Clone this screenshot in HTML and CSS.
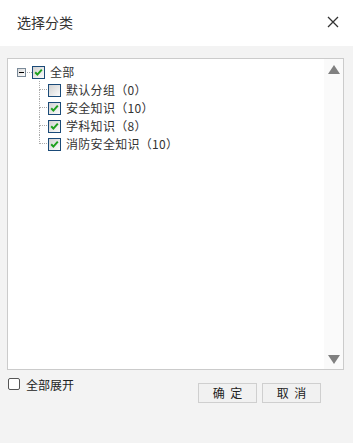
FILE: index.html
```html
<!DOCTYPE html>
<html lang="zh">
<head>
<meta charset="utf-8">
<title>选择分类</title>
<link rel="stylesheet" href="styles.css">
</head>
<body>
<div class="dialog">
  <div class="header">
    <span class="title">选择分类</span>
    <svg class="close" width="12" height="12" viewBox="0 0 12 12"><path d="M1 1L11 11M11 1L1 11" stroke="#333" stroke-width="1.3" fill="none"/></svg>
  </div>
  <div class="body">
    <div class="panel">
      <div class="tree">
        <div class="row parent">
          <svg class="switch" width="9" height="9" viewBox="0 0 9 9"><defs><linearGradient id="sg" x1="0" y1="0" x2="1" y2="1"><stop offset="0" stop-color="#d8d8d8"/><stop offset="1" stop-color="#fff"/></linearGradient></defs><rect x="0.5" y="0.5" width="8" height="8" fill="url(#sg)" stroke="#7a8a99"/><path d="M2 4.5H7" stroke="#000" stroke-width="1"/></svg>
          <span class="hline"></span>
          <svg class="cb" width="13" height="13" viewBox="0 0 13 13"><defs><linearGradient id="cg" x1="0" y1="0" x2="1" y2="1"><stop offset="0" stop-color="#d0d0d0"/><stop offset="1" stop-color="#fdfdfd"/></linearGradient></defs><rect x="0.5" y="0.5" width="12" height="12" fill="url(#cg)" stroke="#1a4a78"/><path d="M3.2 6.2L5.4 8.6L9.8 3.6" stroke="#1ea01e" stroke-width="2" fill="none"/></svg>
          <span class="label">全部</span>
        </div>
        <div class="children">
          <div class="row child">
            <span class="conn"><span class="top"></span><span class="bot"></span></span>
            <svg class="cb" width="13" height="13" viewBox="0 0 13 13"><rect x="0.5" y="0.5" width="12" height="12" fill="url(#cg)" stroke="#1a4a78"/></svg>
            <span class="label">默认分组（0）</span>
          </div>
          <div class="row child">
            <span class="conn"><span class="top"></span><span class="bot"></span></span>
            <svg class="cb" width="13" height="13" viewBox="0 0 13 13"><rect x="0.5" y="0.5" width="12" height="12" fill="url(#cg)" stroke="#1a4a78"/><path d="M3.2 6.2L5.4 8.6L9.8 3.6" stroke="#1ea01e" stroke-width="2" fill="none"/></svg>
            <span class="label">安全知识（10）</span>
          </div>
          <div class="row child">
            <span class="conn"><span class="top"></span><span class="bot"></span></span>
            <svg class="cb" width="13" height="13" viewBox="0 0 13 13"><rect x="0.5" y="0.5" width="12" height="12" fill="url(#cg)" stroke="#1a4a78"/><path d="M3.2 6.2L5.4 8.6L9.8 3.6" stroke="#1ea01e" stroke-width="2" fill="none"/></svg>
            <span class="label">学科知识（8）</span>
          </div>
          <div class="row child last">
            <span class="conn"><span class="top"></span><span class="bot"></span></span>
            <svg class="cb" width="13" height="13" viewBox="0 0 13 13"><rect x="0.5" y="0.5" width="12" height="12" fill="url(#cg)" stroke="#1a4a78"/><path d="M3.2 6.2L5.4 8.6L9.8 3.6" stroke="#1ea01e" stroke-width="2" fill="none"/></svg>
            <span class="label">消防安全知识（10）</span>
          </div>
        </div>
      </div>
      <div class="scroll">
        <svg width="12" height="9" viewBox="0 0 12 9"><path d="M6 0L12 9H0Z" fill="#808080"/></svg>
        <svg width="12" height="9" viewBox="0 0 12 9"><path d="M0 0H12L6 9Z" fill="#808080"/></svg>
      </div>
    </div>
    <div class="footer">
      <label class="expand"><span class="box"></span><span>全部展开</span></label>
      <div class="buttons">
        <button class="btn">确 定</button>
        <button class="btn">取 消</button>
      </div>
    </div>
  </div>
</div>
</body>
</html>
```
FILE: styles.css
```css
* { box-sizing: border-box; }
html, body { margin: 0; padding: 0; }
body {
  width: 353px;
  height: 443px;
  background: #f3f3f3;
  font-family: "Noto Sans CJK SC", "Noto Sans", sans-serif;
  color: #333;
  overflow: hidden;
}
.dialog { display: flex; flex-direction: column; height: 443px; }
.header {
  height: 46px;
  background: #fff;
  display: flex;
  align-items: center;
  justify-content: space-between;
  padding: 0 14px 0 17px;
}
.title { font-size: 14px; line-height: 20px; margin-top: -3px; color: #333; }
.close { margin-top: -3px; }
.body { padding: 12px 0 0 7px; }
.panel {
  width: 337px;
  height: 312px;
  border: 1px solid #cbcbcb;
  background: #fff;
  display: flex;
}
.tree { flex: 1; padding: 4px 0 0 0; }
.row {
  height: 18px;
  display: flex;
  align-items: center;
  font-size: 12px;
  color: #333;
}
.parent { padding-left: 9px; }
.hline {
  width: 5px;
  height: 1px;
  border-top: 1px dotted #aaa;
  margin: 0 0 0 1px;
}
.cb { flex: none; }
.label { margin-left: 5px; line-height: 18px; white-space: nowrap; letter-spacing: 0.3px; }
.child { padding-left: 31px; }
.conn {
  width: 10px;
  height: 18px;
  display: flex;
  flex-direction: column;
  margin-right: -1px;
}
.conn .top {
  height: 9px;
  border-left: 1px dotted #aaa;
  border-bottom: 1px dotted #aaa;
}
.conn .bot {
  height: 9px;
  border-left: 1px dotted #aaa;
}
.last .conn .bot { border-left: none; }
.scroll {
  width: 19px;
  background: #fafafa;
  display: flex;
  flex-direction: column;
  justify-content: space-between;
  align-items: center;
  padding: 6px 0 5px 0;
}
.footer {
  display: flex;
  justify-content: space-between;
  padding-right: 32px;
  margin-top: 6px;
}
.expand {
  display: flex;
  align-items: center;
  font-size: 12px;
  color: #222;
  height: 16px;
  margin-left: 1px;
}
.expand .box {
  width: 12px;
  height: 12px;
  border: 1px solid #555;
  border-radius: 2px;
  background: #fff;
  margin-right: 6px;
}
.buttons { display: flex; gap: 5px; margin-top: 7px; }
.btn {
  width: 59px;
  height: 20px;
  border: 1px solid #cfcfcf;
  background: #f1f1f1;
  font-family: "Noto Sans CJK SC", sans-serif;
  font-size: 12px;
  color: #222;
  padding: 0;
  word-spacing: 3px;
  line-height: 18px;
}
```
